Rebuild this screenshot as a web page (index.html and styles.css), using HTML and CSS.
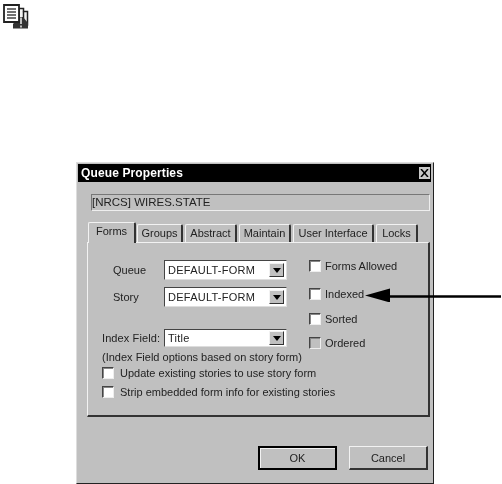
FILE: index.html
```html
<!DOCTYPE html>
<html lang="en">
<head>
  <meta charset="UTF-8">
  <meta name="viewport" content="width=device-width, initial-scale=1.0">
  <title>Queue Properties</title>
  <link rel="stylesheet" href="styles.css">
</head>
<body>
  <!-- Margin icon: pages with a warning sign -->
  <svg class="margin-icon" width="26" height="25" viewBox="0 0 26 25">
    <path d="M16 4.500h4.500v3h4V21H16z" fill="#f4f4f4" stroke="#222" stroke-width="1.500"/>
    <path d="M20.500 7.500v9" stroke="#222" stroke-width="1.500"/>
    <path d="M10 24.500V20l6-7h4l5 6v5.500z" fill="#333"/>
    <path d="M1 1h15v17H1z" fill="#fff" stroke="#222" stroke-width="1.800"/>
    <path d="M4 5h9M4 8h9M4 11h9M4 14h9" stroke="#444" stroke-width="1.500"/>
    <path d="M18 13.500v6.500M18 21.500v2" stroke="#eee" stroke-width="1.500"/>
  </svg>

  <div class="dialog">
    <div class="titlebar">
      <span>Queue Properties</span>
      <span class="close">
        <svg width="9" height="8" viewBox="0 0 9 8"><path d="M1 0l7 8M8 0l-7 8" stroke="#000" stroke-width="1.500"/></svg>
      </span>
    </div>

    <div class="name-field">[NRCS] WIRES.STATE</div>

    <div class="tabs">
      <div class="tab active">Forms</div>
      <div class="tab tab-groups">Groups</div>
      <div class="tab tab-abstract">Abstract</div>
      <div class="tab tab-maintain">Maintain</div>
      <div class="tab tab-ui">User Interface</div>
      <div class="tab tab-locks">Locks</div>
    </div>

    <div class="panel">
      <div class="columns">
        <div class="form-col">
          <div class="form-row row-queue">
            <span class="form-label">Queue</span>
            <div class="select"><span class="select-value">DEFAULT-FORM</span><span class="select-btn"></span></div>
          </div>
          <div class="form-row row-story">
            <span class="form-label">Story</span>
            <div class="select"><span class="select-value">DEFAULT-FORM</span><span class="select-btn"></span></div>
          </div>
          <div class="form-row row-index">
            <span class="form-label label-index">Index Field:</span>
            <div class="select"><span class="select-value">Title</span><span class="select-btn"></span></div>
          </div>
        </div>
        <div class="check-col">
          <label class="check"><span class="box"></span>Forms Allowed</label>
          <label class="check check-indexed"><span class="box"></span>Indexed</label>
          <label class="check check-sorted"><span class="box"></span>Sorted</label>
          <label class="check check-ordered"><span class="box box-disabled"></span>Ordered</label>
        </div>
      </div>
      <div class="hint">(Index Field options based on story form)</div>
      <label class="check wide"><span class="box"></span>Update existing stories to use story form</label>
      <label class="check wide"><span class="box"></span>Strip embedded form info for existing stories</label>
    </div>

    <div class="actions">
      <div class="button default"><span>OK</span></div>
      <div class="button"><span>Cancel</span></div>
    </div>
  </div>

  <!-- Callout arrow over the dialog -->
  <svg class="callout" width="137" height="15" viewBox="0 0 137 15">
    <path d="M136 9.500H20" stroke="#000" stroke-width="2.500"/>
    <path d="M0 8.500l25-7v14z" fill="#000"/>
  </svg>
</body>
</html>
```

FILE: styles.css
```css
body {
  margin: 0;
  padding: 4px 0 0 3px;
  background: #fff;
  font-family: "Liberation Sans", Arial, sans-serif;
  font-size: 11px;
  color: #222;
}
.margin-icon {
  display: block;
  filter: blur(.4px);
}
.dialog {
  box-sizing: border-box;
  width: 358px;
  height: 322px;
  margin: 133px 0 0 73px;
  padding: 1px 2px 0 1px;
  background: #c0c0c0;
  border-left: 1px solid #ddd;
  border-top: 1px solid #ddd;
  border-right: 1px solid #222;
  border-bottom: 1px solid #222;
  filter: blur(.35px);
}
.titlebar {
  display: flex;
  justify-content: space-between;
  align-items: center;
  height: 18px;
  padding: 0 1px 0 3px;
  background: #000;
  color: #fff;
  font-size: 12px;
  font-weight: bold;
  letter-spacing: .12px;
}
.close {
  display: flex;
  align-items: center;
  justify-content: center;
  width: 11px;
  height: 12px;
  background: #c8c8c8;
}
.name-field {
  box-sizing: border-box;
  height: 17px;
  margin: 12px 1px 0 13px;
  border: 1px solid #777;
  border-right-color: #eee;
  border-bottom-color: #eee;
  line-height: 15px;
  font-size: 11.500px;
}
.tabs {
  display: flex;
  align-items: flex-end;
  height: 21px;
  margin: 10px 0 0 10px;
}
.tab {
  box-sizing: border-box;
  height: 18px;
  margin-right: 2px;
  border: 1px solid #f2f2f2;
  border-right: 2px solid #333;
  border-bottom: 0;
  border-radius: 2px 2px 0 0;
  text-align: center;
  line-height: 16px;
}
.tab.active {
  width: 48px;
  height: 21px;
  margin-right: 1px;
  position: relative;
  top: 1px;
  z-index: 1;
  background: #c0c0c0;
  line-height: 17px;
}
.tab-groups { width: 46px; }
.tab-abstract { width: 52px; }
.tab-maintain { width: 52px; }
.tab-ui { width: 81px; }
.tab-locks { width: 42px; }
.panel {
  box-sizing: border-box;
  height: 175px;
  margin: 0 1px 0 9px;
  padding: 17px 0 0 14px;
  border: 1px solid #f2f2f2;
  border-right: 2px solid #333;
  border-bottom: 2px solid #333;
}
.columns {
  display: flex;
}
.form-col {
  width: 208px;
}
.form-row {
  display: flex;
  align-items: center;
}
.row-story {
  margin-top: 7px;
}
.row-index {
  margin-top: 22px;
}
.form-label {
  width: 62px;
  padding-left: 11px;
  box-sizing: border-box;
}
.label-index {
  padding-left: 0;
  letter-spacing: .1px;
}
.select {
  box-sizing: border-box;
  display: flex;
  align-items: center;
  justify-content: space-between;
  width: 123px;
  height: 20px;
  padding: 0 2px 0 3px;
  background: #fff;
  border: 1px solid #444;
  border-right-color: #ddd;
  border-bottom-color: #ddd;
  letter-spacing: .25px;
}
.row-index .select {
  height: 18px;
}
.select-btn {
  box-sizing: border-box;
  position: relative;
  width: 15px;
  height: 14px;
  background: #c0c0c0;
  border: 1px solid #f2f2f2;
  border-right-color: #333;
  border-bottom-color: #333;
}
.select-btn::after {
  content: "";
  position: absolute;
  left: 3px;
  top: 4px;
  border: 4px solid transparent;
  border-top: 5px solid #000;
  border-bottom: 0;
}
.check-col {
  display: flex;
  flex-direction: column;
  margin-left: -1px;
}
.check-indexed {
  margin-top: 16px;
}
.check-sorted {
  margin-top: 13px;
}
.check-ordered {
  margin-top: 12px;
}
.check {
  display: flex;
  align-items: center;
  gap: 4px;
  height: 12px;
}
.box {
  box-sizing: border-box;
  width: 12px;
  height: 12px;
  background: #fff;
  border: 1px solid #444;
  border-right-color: #eee;
  border-bottom-color: #eee;
  box-shadow: inset 1px 1px 0 #888;
}
.box-disabled {
  background: #c0c0c0;
}
.hint {
  margin: 2px 0 3px;
  height: 13px;
  line-height: 13px;
}
.wide {
  gap: 6px;
  margin: 2px 0 7px;
}
.actions {
  display: flex;
  justify-content: flex-end;
  gap: 12px;
  margin: 29px 3px 0 0;
}
.button {
  box-sizing: border-box;
  display: flex;
  align-items: center;
  justify-content: center;
  width: 79px;
  height: 24px;
  border: 1px solid #f2f2f2;
  border-right: 2px solid #333;
  border-bottom: 2px solid #333;
}
.button.default {
  border: 2px solid #000;
  box-shadow: inset 1px 1px 0 #f2f2f2;
}
.callout {
  position: absolute;
  left: 365px;
  top: 287px;
}
```
